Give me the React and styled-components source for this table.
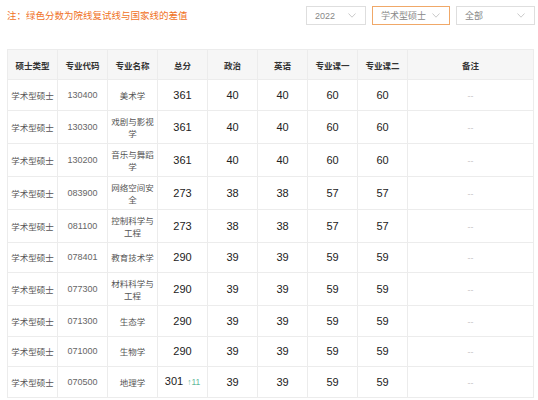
import React from 'react';
import styled, { createGlobalStyle } from 'styled-components';

const GlobalStyle = createGlobalStyle`
  body {
    margin: 0;
    background: #fff;
    font-family: "Noto Sans", "Noto Sans CJK SC", sans-serif;
  }
`;

const Page = styled.div`
  width: 538px;
  padding: 6px 5px 0 7px;
  box-sizing: border-box;
`;

const TopBar = styled.div`
  display: flex;
  align-items: center;
  justify-content: space-between;
  height: 19px;
`;

const Note = styled.div`
  font-size: 9.5px;
  color: #f07226;
  font-family: "Noto Sans CJK SC", sans-serif;
  line-height: 19px;
`;

const Filters = styled.div`
  display: flex;
  gap: 6px;
  margin-right: -2px;
`;

const Select = styled.div`
  width: ${({ width }) => width}px;
  height: 19px;
  box-sizing: border-box;
  border: 1px solid ${({ active }) => (active ? '#f0a868' : '#dedede')};
  display: flex;
  align-items: center;
  justify-content: space-between;
  padding: 0 9px 0 8px;
  font-size: 9px;
  color: #888;
  font-family: "Liberation Sans", "Noto Sans CJK SC", sans-serif;
`;

const Chevron = () => (
  <svg width="8" height="5" viewBox="0 0 8 5">
    <polyline points="0.5,0.5 4,4.2 7.5,0.5" fill="none" stroke="#c4c4c4" strokeWidth="0.9" />
  </svg>
);

const Table = styled.table`
  margin-top: 24px;
  width: 526px;
  table-layout: fixed;
  border-collapse: collapse;
  border: 1px solid #ececec;
`;

const HeadCell = styled.th`
  height: 29px;
  padding: 0;
  background: #f6f6f6;
  border: 1px solid #ececec;
  font-size: 8.5px;
  font-weight: 700;
  color: #333;
  font-family: "Noto Sans CJK SC", sans-serif;
`;

const Row = styled.tr`
  height: 30.5px;
`;

const Cell = styled.td`
  padding: 4px 3px;
  border: 1px solid #ececec;
  text-align: center;
  vertical-align: middle;
  font-size: ${({ kind }) => (kind === 'num' ? '11px' : kind === 'code' ? '9px' : '8.5px')};
  line-height: ${({ kind }) => (kind === 'num' ? '14px' : '12px')};
  color: ${({ kind }) => (kind === 'num' ? '#222' : kind === 'code' ? '#666' : kind === 'dash' ? '#bbb' : '#555')};
  font-family: ${({ kind }) =>
    kind === 'num' || kind === 'code' ? '"Liberation Sans", sans-serif' : '"Noto Sans CJK SC", sans-serif'};
`;

const Diff = styled.span`
  font-size: 8.5px;
  color: #62b99a;
  margin-left: 4px;
`;

const headers = ['硕士类型', '专业代码', '专业名称', '总分', '政治', '英语', '专业课一', '专业课二', '备注'];

const rows = [
  ['130400', '美术学', 361, 40, 40, 60, 60],
  ['130300', '戏剧与影视学', 361, 40, 40, 60, 60],
  ['130200', '音乐与舞蹈学', 361, 40, 40, 60, 60],
  ['083900', '网络空间安全', 273, 38, 38, 57, 57],
  ['081100', '控制科学与工程', 273, 38, 38, 57, 57],
  ['078401', '教育技术学', 290, 39, 39, 59, 59],
  ['077300', '材料科学与工程', 290, 39, 39, 59, 59],
  ['071300', '生态学', 290, 39, 39, 59, 59],
  ['071000', '生物学', 290, 39, 39, 59, 59],
  ['070500', '地理学', 301, 39, 39, 59, 59, 11]
];

export default function App() {
  return (
    <Page>
      <GlobalStyle />
      <TopBar>
        <Note>注：绿色分数为院线复试线与国家线的差值</Note>
        <Filters>
          <Select width={60}>
            2022
            <Chevron />
          </Select>
          <Select width={78} active>
            学术型硕士
            <Chevron />
          </Select>
          <Select width={79}>
            全部
            <Chevron />
          </Select>
        </Filters>
      </TopBar>
      <Table>
        <colgroup>
          {headers.map((h, i) => (
            <col key={h} style={{ width: i === 8 ? 126 : 50 }} />
          ))}
        </colgroup>
        <thead>
          <tr>
            {headers.map((h) => (
              <HeadCell key={h}>{h}</HeadCell>
            ))}
          </tr>
        </thead>
        <tbody>
          {rows.map(([code, name, total, pol, eng, c1, c2, diff]) => (
            <Row key={code}>
              <Cell>学术型硕士</Cell>
              <Cell kind="code">{code}</Cell>
              <Cell>{name}</Cell>
              <Cell kind="num">
                {total}
                {diff && <Diff>↑{diff}</Diff>}
              </Cell>
              <Cell kind="num">{pol}</Cell>
              <Cell kind="num">{eng}</Cell>
              <Cell kind="num">{c1}</Cell>
              <Cell kind="num">{c2}</Cell>
              <Cell kind="dash">--</Cell>
            </Row>
          ))}
        </tbody>
      </Table>
    </Page>
  );
}
